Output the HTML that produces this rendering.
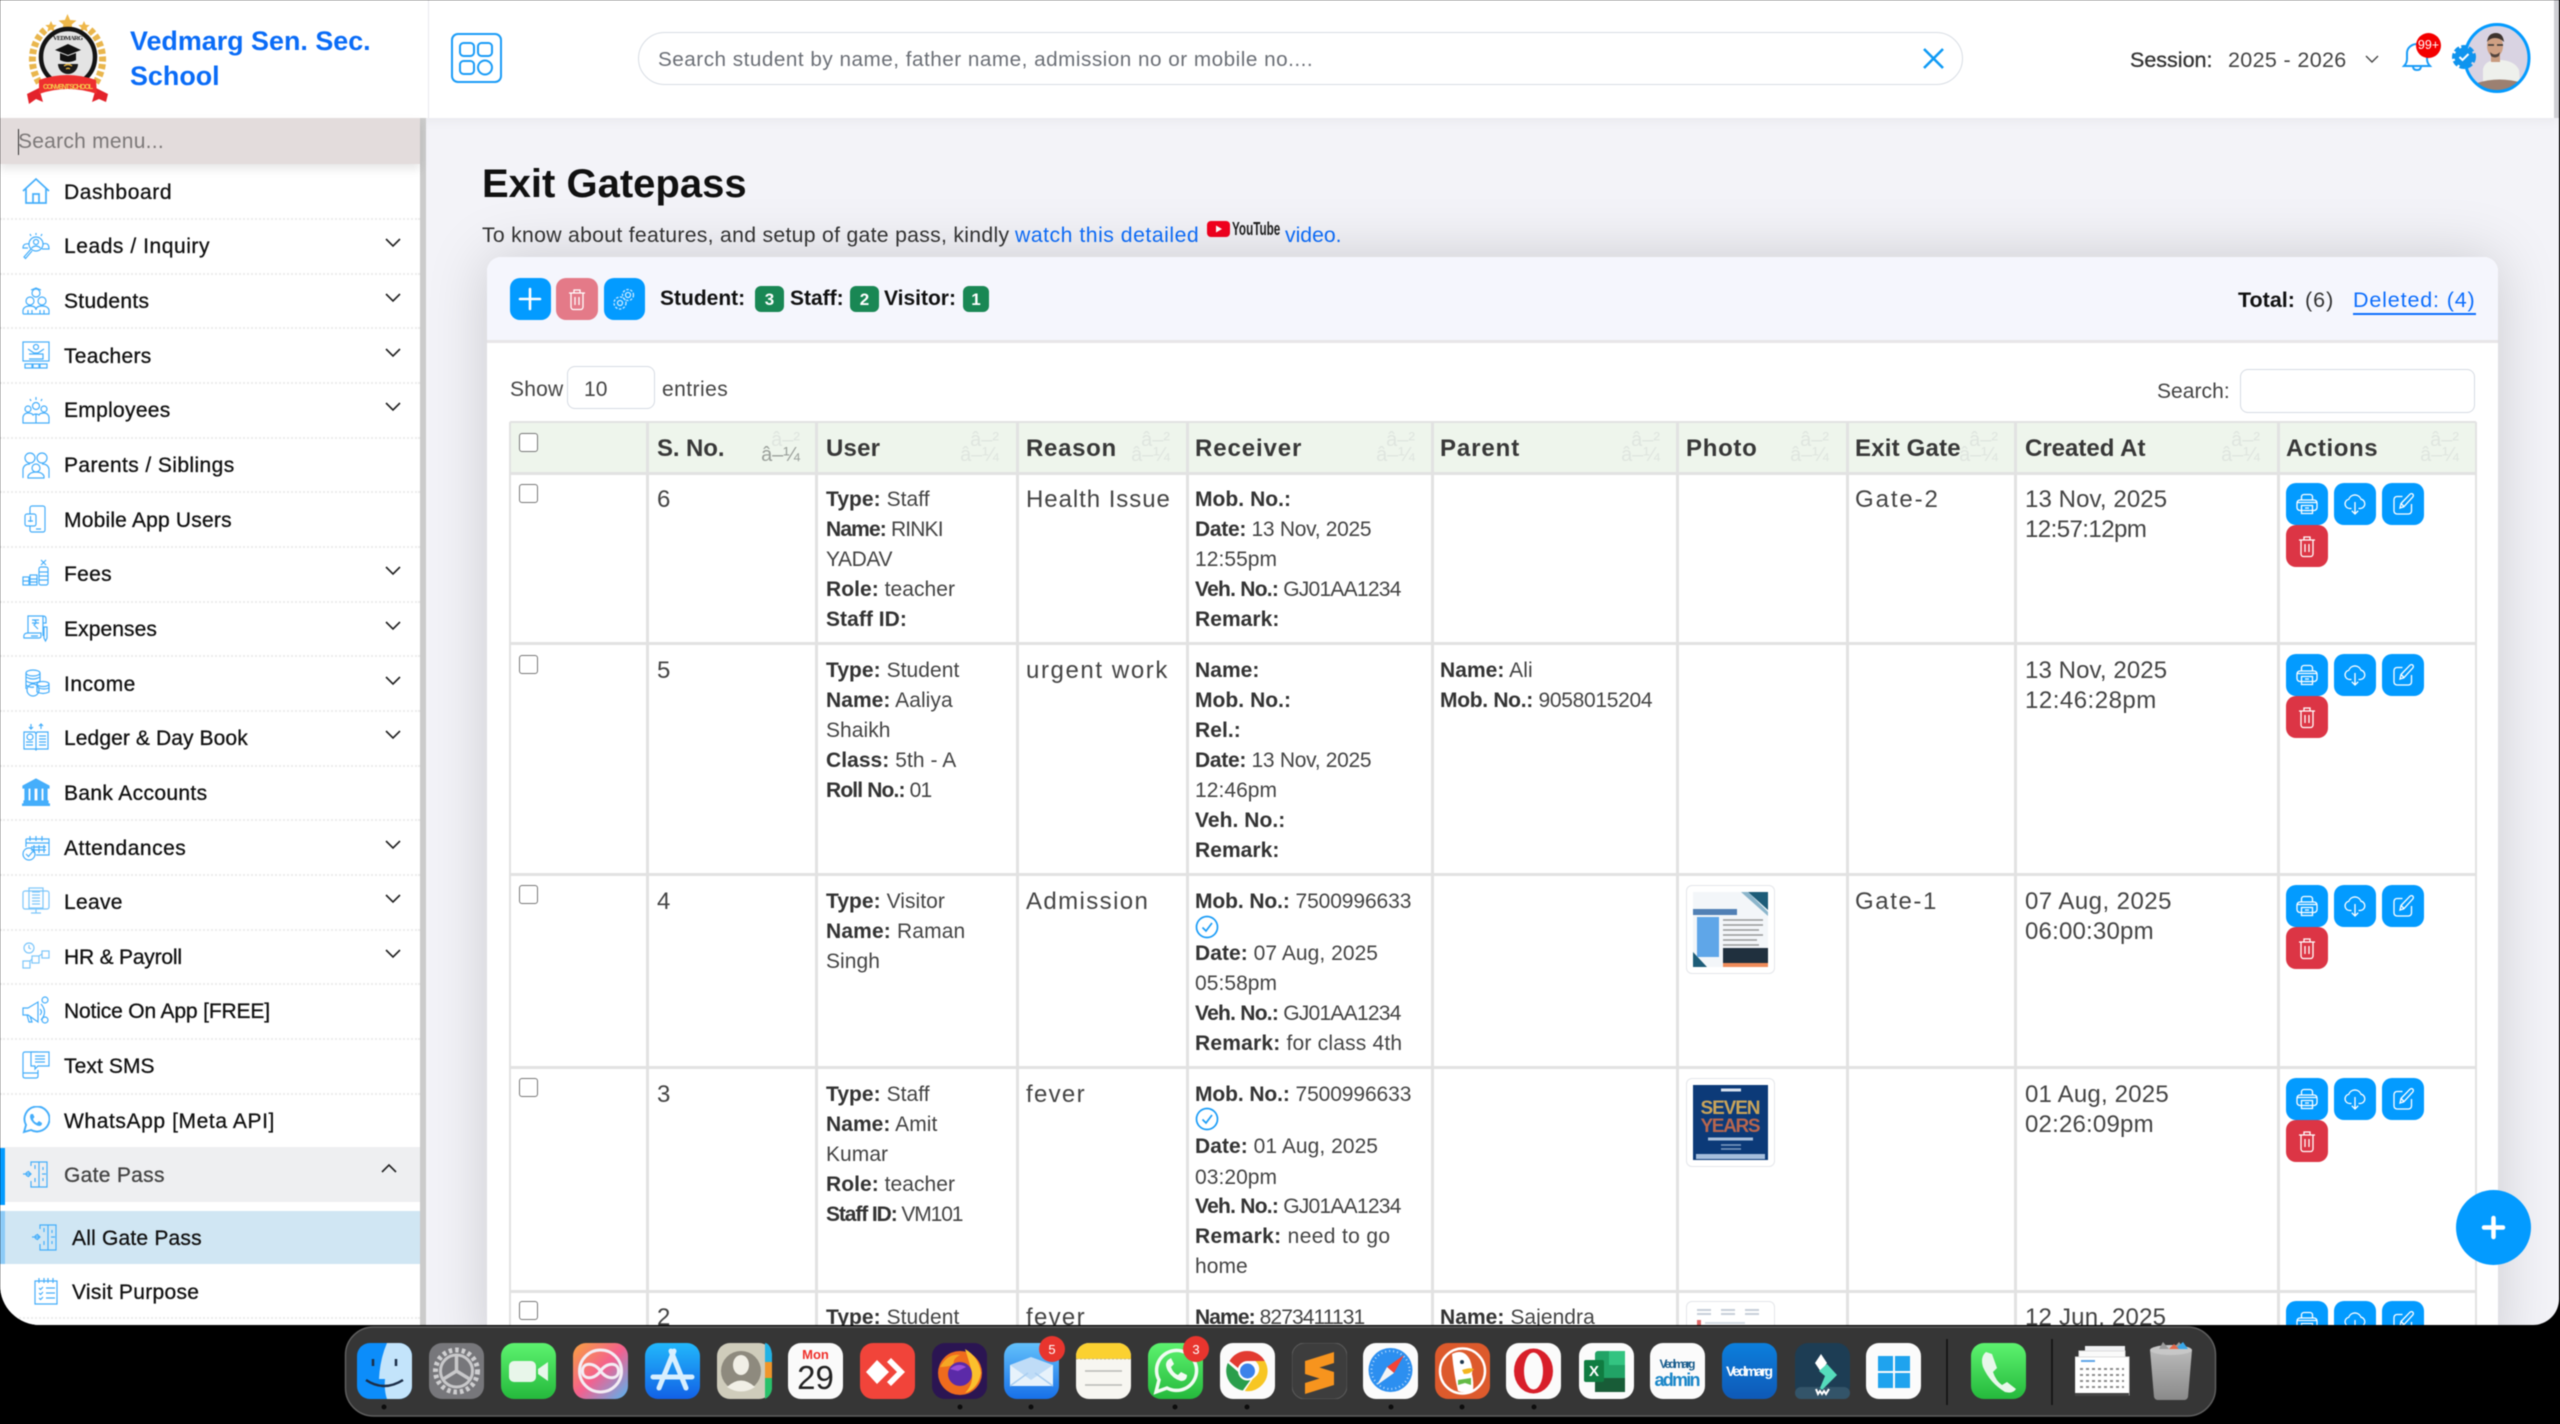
<!DOCTYPE html>
<html><head><meta charset="utf-8"><title>Exit Gatepass</title>
<style>
*{box-sizing:border-box}
html,body{margin:0;padding:0;width:2560px;height:1424px;overflow:hidden;background:#000;font-family:"Liberation Sans",sans-serif}
#root{position:absolute;left:0;top:0;width:2560px;height:1424px;filter:blur(.45px)}
#win{position:absolute;left:0;top:0;width:2559px;height:1325px;background:#f3f3f8;overflow:hidden;border-radius:0 0 26px 40px}
.a{position:absolute}
.t{position:absolute;white-space:nowrap;line-height:30px;height:30px;margin-top:1.5px}
.c{font-size:21px;color:#444;letter-spacing:.05px}
.c b{color:#333}
.l{font-size:24px;color:#444;letter-spacing:1px}
.d{letter-spacing:.1px}
.m{font-size:21px;color:#111;letter-spacing:.3px;-webkit-text-stroke:.3px #111;left:64px}
.h{font-size:24px;font-weight:700;color:#383838;letter-spacing:.2px}
.s{font-size:20px;line-height:20px;height:20px;color:#dfe5df;width:60px;text-align:right;position:absolute}
.sep{position:absolute;left:0;width:420px;height:0;border-top:2px dotted #ececec}
.vl{position:absolute;top:422px;height:903px;width:3px;background:#e2e2e2}
.hl{position:absolute;left:510px;width:1966px;height:3px;background:#e2e2e2}
.btn{position:absolute;width:42px;height:42px;border-radius:10px;background:#039bff}
.btn svg{position:absolute;left:9px;top:9px;width:24px;height:24px;fill:none;stroke:#fff;stroke-width:1.3}
.red{background:#dc3545}
.cb{position:absolute;width:19px;height:19px;border:1.5px solid #777;border-radius:3px;background:#fff;left:519px}
.ic{position:absolute;left:22px;width:28px;height:28px;fill:none;stroke:#45aefb;stroke-width:1.2}
.ch{position:absolute;left:385px;width:16px;height:10px;fill:none;stroke:#222;stroke-width:1.6}
.bd{position:absolute;top:286px;height:26px;border-radius:6px;background:#198754;color:#fff;font-size:17px;font-weight:700;text-align:center;line-height:27px}
.ph{position:absolute;left:1686px;width:89px;height:89px;background:#fff;border:1.5px solid #e4e6ea;border-radius:6px}
</style></head><body>
<div id="root">
<svg width="0" height="0" style="position:absolute"><defs>
<symbol id="pr" viewBox="0 0 24 24"><path d="M6.5 8V5a2.500 2.500 0 0 1 2.500-2.500h6A2.500 2.500 0 0 1 17.500 5v3"/><rect x="2" y="8" width="20" height="10.500" rx="3"/><path d="M6.500 13.500h11v8h-11z"/><path d="M2.500 10.500h19M10 16h4M10 18.500h4"/></symbol>
<symbol id="cl" viewBox="0 0 24 24"><path d="M8.500 16.500H6.500A4.700 4.700 0 0 1 5.800 7.200 6.500 6.500 0 0 1 18 7.200a4.700 4.700 0 0 1-.5 9.300h-2"/><path d="M12 10v12M8.800 18.800 12 22l3.200-3.200"/></symbol>
<symbol id="ed" viewBox="0 0 24 24"><path d="M11.500 4.500H6a3 3 0 0 0-3 3V19a3 3 0 0 0 3 3h11.500a3 3 0 0 0 3-3v-7"/><path d="M9 16l1-4.500L19 2.200a1.900 1.900 0 0 1 2.800 2.700L12.800 14.800zM10 11.500l3 3"/></symbol>
<symbol id="tr" viewBox="0 0 24 24"><path d="M4 6h16M9 6V3h6v3M6 6v14a2.500 2.500 0 0 0 2.500 2.500h7A2.500 2.500 0 0 0 18 20V6M10 10v8M14 10v8"/></symbol>
<symbol id="gt" viewBox="0 0 28 28"><path d="M9 6V2h16v25H9v-6M17 2v25M9 14H1M6 11l3 3-3 3M20 14h4M21 7v3M21 18v3M13 18v4M13 5v4"/><circle cx="6" cy="14" r="2"/></symbol>
</defs></svg>

<div id="win">
<!-- header -->
<div class="a" style="left:0;top:0;width:2559px;height:118px;background:#fff;box-shadow:0 2px 12px rgba(0,0,0,.05)"></div>
<div class="a" style="left:428px;top:0;width:1px;height:118px;background:#e9e9ee"></div>
<div class="a" style="left:2554px;top:0;width:6px;height:118px;background:#cfcfd4"></div>

<!-- logo -->
<svg class="a" style="left:27px;top:14px" width="81" height="90" viewBox="0 0 81 90">
<g fill="#efb84a"><path d="M40.500 0l2.600 6 6.400.5-4.900 4.100 1.500 6.200-5.600-3.400-5.600 3.400 1.500-6.200-4.900-4.100 6.400-.5z"/><path d="M57 7l1.700 3.700 4 .4-3 2.700.9 3.900L57 15.700l-3.600 2 .9-3.900-3-2.700 4-.4z"/><path d="M24 7l1.700 3.700 4 .4-3 2.700.9 3.900L24 15.700l-3.600 2 .9-3.900-3-2.700 4-.4z"/></g>
<path d="M18 16C5 28 0 50 13 70M63 16c13 12 18 34 5 54" fill="none" stroke="#e9b64d" stroke-width="7" stroke-dasharray="5 2.500"/>
<ellipse cx="41" cy="43" rx="27" ry="28" fill="#e4e4e4" stroke="#141414" stroke-width="4.500"/>
<path d="M28 36l13-6 13 6-13 5z" fill="#111"/><path d="M33 39v7q8 4 16 0v-7l-8 3z" fill="#111"/>
<path d="M31 50a10 10 0 0 0 20 0z" fill="#1a1a1a"/><path d="M37 52q4-3 8 0M39 55q2-1.500 4 0" stroke="#e5b33c" stroke-width="1.400" fill="none"/>
<path d="M0 80l12-6 4 14-7-3-7 5zM81 80l-12-6-4 14 7-3 7 3z" fill="#e3222b"/>
<path d="M12 66q28-10 57 0l1 14q-29-10-58 0z" fill="#ee2f2f"/>
<text x="41" y="75" font-size="7" fill="#f6cc4d" font-weight="700" text-anchor="middle" font-family="Liberation Sans" textLength="50">CONVENT SCHOOL</text>
<text x="41" y="26" font-size="6.500" fill="#222" font-weight="700" text-anchor="middle" font-family="Liberation Serif" textLength="30">VEDMARG</text>
</svg>
<div class="t" style="left:130px;top:24px;font-size:26.900px;font-weight:700;color:#0a6cf7">Vedmarg Sen. Sec.</div>
<div class="t" style="left:130px;top:59px;font-size:26.900px;font-weight:700;color:#0a6cf7">School</div>

<!-- grid button -->
<div class="a" style="left:451px;top:33px;width:51px;height:50px;border:2px solid #1a9cf7;border-radius:7px"></div>
<svg class="a" style="left:459px;top:41px" width="35" height="35" fill="none" stroke="#1a9cf7" stroke-width="2"><rect x="1" y="2" width="14" height="13" rx="3.500"/><rect x="19" y="2" width="14" height="13" rx="3.500"/><rect x="1" y="20" width="14" height="13" rx="3.500"/><circle cx="26" cy="26.500" r="7"/></svg>

<!-- top search -->
<div class="a" style="left:638px;top:32px;width:1325px;height:53px;border:1.5px solid #d8dde4;border-radius:27px;background:#fff"></div>
<div class="t" style="left:658px;top:43px;font-size:20.700px;color:#6b6f76;letter-spacing:.5px">Search student by name, father name, admission no or mobile no....</div>
<svg class="a" style="left:1922px;top:47px" width="23" height="23" stroke="#0f9bf5" stroke-width="2.600"><path d="M2 2l19 19M21 2 2 21"/></svg>

<div class="t" style="left:2130px;top:43px;font-size:21.500px;color:#333;-webkit-text-stroke:.3px #333">Session:</div>
<div class="t" style="left:2228px;top:43px;font-size:21.500px;color:#444;letter-spacing:.35px">2025 - 2026</div>
<svg class="a" style="left:2365px;top:55px" width="14" height="9" fill="none" stroke="#444" stroke-width="1.400"><path d="M1 1l6 6 6-6"/></svg>

<!-- bell -->
<svg class="a" style="left:2402px;top:43px" width="30" height="31" fill="none" stroke="#1a9cf7" stroke-width="2"><path d="M2 23q3-3 3-7V10a10 9 0 0 1 20 0v6q0 4 3 7zM11 23q0 4 4 4t4-4"/></svg>
<div class="a" style="left:2416px;top:33px;width:25px;height:25px;border-radius:50%;background:#f40000;color:#fff;font-size:12.500px;text-align:center;line-height:24px">99+</div>

<!-- avatar + verified -->
<svg class="a" style="left:2463px;top:23px" width="68" height="70" viewBox="0 0 68 70">
<defs><clipPath id="av"><ellipse cx="34" cy="35" rx="31" ry="33"/></clipPath></defs>
<ellipse cx="34" cy="35" rx="32" ry="34" fill="#d9d3e2"/>
<g clip-path="url(#av)"><path d="M20 70V46q2-8 12-9h6q14 1 18 10l2 23z" fill="#eef0ec"/><path d="M14 60q22-7 46 0v10H14z" fill="#9c8071"/><rect x="28" y="30" width="9" height="9" fill="#c99b7e"/><ellipse cx="32" cy="23" rx="8" ry="11" fill="#cfa083"/><path d="M24 19q1-9 9-9 7 0 8 9-4-4-9-4t-8 4z" fill="#3e342f"/><path d="M25 22h6M34 22h6" stroke="#333" stroke-width="1.400"/><path d="M27 29q5 5 10 0l-1 4q-4 3-8 0z" fill="#51433c"/></g>
<ellipse cx="34" cy="35" rx="32" ry="33.500" fill="none" stroke="#039bff" stroke-width="3"/>
</svg>
<svg class="a" style="left:2451px;top:44px" width="26" height="26"><circle cx="13" cy="13" r="9.500" fill="#0f94ee" stroke="#0f94ee" stroke-width="5" stroke-dasharray="5 2"/><path d="M8.500 13l3 3 6-6" fill="none" stroke="#fff" stroke-width="2"/></svg>

<!-- sidebar -->
<div class="a" style="left:0;top:118px;width:420px;height:1207px;background:#fff"></div>
<div class="a" style="left:420px;top:118px;width:6px;height:1207px;background:#cbcbcb"></div>
<div class="a" style="left:0;top:118px;width:420px;height:46px;background:#e3dcdc;box-shadow:0 5px 9px rgba(0,0,0,.1)"></div>
<div class="a" style="left:18px;top:129px;width:1px;height:26px;background:#333"></div>
<div class="t" style="left:18px;top:125px;font-size:21px;color:#7c7878;letter-spacing:.25px">Search menu...</div>

<div class="sep" style="top:218px"></div><div class="sep" style="top:273px"></div><div class="sep" style="top:327px"></div><div class="sep" style="top:382px"></div><div class="sep" style="top:437px"></div><div class="sep" style="top:491px"></div><div class="sep" style="top:546px"></div><div class="sep" style="top:601px"></div><div class="sep" style="top:655px"></div><div class="sep" style="top:710px"></div><div class="sep" style="top:765px"></div><div class="sep" style="top:819px"></div><div class="sep" style="top:874px"></div><div class="sep" style="top:929px"></div><div class="sep" style="top:983px"></div><div class="sep" style="top:1038px"></div><div class="sep" style="top:1093px"></div><div class="sep" style="top:1317px"></div>
<div class="a" style="left:0;top:1147px;width:420px;height:55px;background:#eeeff1"></div>
<div class="a" style="left:0;top:1148px;width:5px;height:57px;background:#039bff"></div>
<div class="a" style="left:0;top:1211px;width:420px;height:53px;background:#d0e6f3"></div>
<div class="a" style="left:0;top:1211px;width:5px;height:53px;background:#8ccbf7"></div>

<div class="t m" style="top:176px;letter-spacing:.6px">Dashboard</div>
<div class="t m" style="top:230px;letter-spacing:.55px">Leads / Inquiry</div>
<div class="t m" style="top:285px">Students</div>
<div class="t m" style="top:340px">Teachers</div>
<div class="t m" style="top:394px">Employees</div>
<div class="t m" style="top:449px;letter-spacing:.4px">Parents / Siblings</div>
<div class="t m" style="top:504px;letter-spacing:.2px">Mobile App Users</div>
<div class="t m" style="top:558px">Fees</div>
<div class="t m" style="top:613px;letter-spacing:.1px">Expenses</div>
<div class="t m" style="top:668px;letter-spacing:.5px">Income</div>
<div class="t m" style="top:722px;letter-spacing:.1px">Ledger &amp; Day Book</div>
<div class="t m" style="top:777px;letter-spacing:.35px">Bank Accounts</div>
<div class="t m" style="top:832px;letter-spacing:.5px">Attendances</div>
<div class="t m" style="top:886px">Leave</div>
<div class="t m" style="top:941px;letter-spacing:-.2px">HR &amp; Payroll</div>
<div class="t m" style="top:995px;letter-spacing:-.15px">Notice On App [FREE]</div>
<div class="t m" style="top:1050px;letter-spacing:.1px">Text SMS</div>
<div class="t m" style="top:1105px;letter-spacing:.6px">WhatsApp [Meta API]</div>
<div class="t m" style="top:1159px;color:#444;-webkit-text-stroke:.3px #444">Gate Pass</div>
<div class="t m" style="top:1222px;left:72px;letter-spacing:.2px">All Gate Pass</div>
<div class="t m" style="top:1276px;left:72px">Visit Purpose</div>

<!-- chevrons -->
<svg class="ch" style="top:238px"><path d="M1 1l7 7 7-7"/></svg>
<svg class="ch" style="top:293px"><path d="M1 1l7 7 7-7"/></svg>
<svg class="ch" style="top:348px"><path d="M1 1l7 7 7-7"/></svg>
<svg class="ch" style="top:402px"><path d="M1 1l7 7 7-7"/></svg>
<svg class="ch" style="top:566px"><path d="M1 1l7 7 7-7"/></svg>
<svg class="ch" style="top:621px"><path d="M1 1l7 7 7-7"/></svg>
<svg class="ch" style="top:676px"><path d="M1 1l7 7 7-7"/></svg>
<svg class="ch" style="top:730px"><path d="M1 1l7 7 7-7"/></svg>
<svg class="ch" style="top:840px"><path d="M1 1l7 7 7-7"/></svg>
<svg class="ch" style="top:894px"><path d="M1 1l7 7 7-7"/></svg>
<svg class="ch" style="top:949px"><path d="M1 1l7 7 7-7"/></svg>
<svg class="ch" style="top:1163px;left:381px"><path d="M1 9l7-7 7 7"/></svg>

<!-- sidebar icons -->
<svg class="ic" style="top:177px;stroke-width:1.700" viewBox="0 0 28 28"><path d="M1 14 14 2l13 12M4 11v15h20V11M11 26v-9h6v9"/></svg>
<svg class="ic" style="top:232px" viewBox="0 0 28 28"><circle cx="14" cy="12" r="7"/><circle cx="14" cy="10" r="2.500"/><path d="M9.500 16q4.500-4 9 0M9 17 2 25l1.500 1.500L10 19M14 1v2M8 2l1 2M20 2l-1 2M21 12q6-2 6 5h-7M7 12q-6-1-6 4h5"/></svg>
<svg class="ic" style="top:287px" viewBox="0 0 28 28"><circle cx="14" cy="6" r="4"/><path d="M9 3l5-2 5 2"/><circle cx="8" cy="14" r="4"/><circle cx="20" cy="14" r="4"/><path d="M1 27v-4q1-4 7-4t6 4q0-4 6-4t7 4v4H1M6 23v4M10 23v4M18 23v4M22 23v4"/></svg>
<svg class="ic" style="top:341px" viewBox="0 0 28 28"><rect x="1" y="1" width="26" height="19"/><circle cx="14" cy="6" r="2.500"/><path d="M6 8l6 4h4l6-4M7 13h14v5H7M3 27v-4h7v4zM11 27v-4h6v4zM18 27v-4h7v4z"/></svg>
<svg class="ic" style="top:396px" viewBox="0 0 28 28"><circle cx="14" cy="10" r="3.500"/><circle cx="6" cy="13" r="3"/><circle cx="22" cy="13" r="3"/><path d="M1 27v-6q1-4 5-4t5 2q3-2 6 0 1-2 5-2t5 4v6zM14 1v3M8 3l1 2M20 3l-1 2M14 18v9"/></svg>
<svg class="ic" style="top:451px" viewBox="0 0 28 28"><circle cx="8" cy="7" r="5"/><circle cx="20" cy="7" r="5"/><circle cx="14" cy="17" r="4"/><path d="M1 27v-9q1-5 7-5M27 27v-9q-1-5-7-5M6 27v-2q2-4 8-4t8 4v2z"/></svg>
<svg class="ic" style="top:505px" viewBox="0 0 28 28"><rect x="8" y="1" width="15" height="26" rx="2"/><rect x="3" y="9" width="11" height="12" rx="2" fill="#fff"/><path d="M8.500 11v6M6 16h5M14 24h5"/></svg>
<svg class="ic" style="top:559px" viewBox="0 0 28 28"><rect x="1" y="18" width="6" height="8"/><rect x="8" y="16" width="7" height="10"/><rect x="17" y="8" width="9" height="18" rx="2"/><path d="M1 22h6M8 20h7M8 23h7M17 13h9M17 17h9M17 21h9M19 1l5 5M24 1l-5 5"/></svg>
<svg class="ic" style="top:614px" viewBox="0 0 28 28"><path d="M6 19V2h15v20M21 2q3 0 3 3v4h-3M2 24q-1-5 4-5h13v3q0 2-2 2zM10 6h7M10 9h7M12 6q4 2 0 5l4 4M9 22h7M25 13v11l-1.500 3-1.500-3V13z"/></svg>
<svg class="ic" style="top:669px" viewBox="0 0 28 28"><ellipse cx="11" cy="4" rx="7" ry="3"/><path d="M4 4v16M18 4v9M4 8q7 4 14 0M4 12q7 4 14 0M4 16q4 3 8 2"/><circle cx="11" cy="21" r="6"/><ellipse cx="21" cy="15" rx="6" ry="2.500"/><path d="M15 15v8q6 3 12 0v-8M17 19q5 2 10 0"/></svg>
<svg class="ic" style="top:723px" viewBox="0 0 28 28"><path d="M2 9h11l1 2 1-2h11v17H15l-1 1-1-1H2zM14 11v15"/><circle cx="8" cy="14" r="3"/><path d="M4 19h7M4 22h7M17 13h7M17 16h7M17 19h7M17 22h7M9 1v5M7 4l2 2 2-2M19 6V1M17 3l2-2 2 2"/></svg>
<svg class="ic" style="top:778px;fill:#45aefb" viewBox="0 0 28 28"><path d="M14 1 1 8v2h26V8z"/><path d="M3 11h3v11H3zM9 11h3v11H9zM16 11h3v11h-3zM22 11h3v11h-3zM2 23h24v2H2zM0 26h28v2H0z"/></svg>
<svg class="ic" style="top:833px" viewBox="0 0 28 28"><path d="M4 6h23v16H14M4 6v8M4 10h23M8 3v5M14 3v5M20 3v5M9 14h15M9 17h15M12 12v8M17 12v8M22 12v8"/><circle cx="7" cy="21" r="6"/><path d="M4 21l2.500 2.500L12 17"/></svg>
<svg class="ic" style="top:887px;stroke:#7cc6fb" viewBox="0 0 28 28"><rect x="1" y="4" width="26" height="18" rx="2"/><rect x="7" y="1" width="14" height="20"/><path d="M10 5h8M10 8h8M10 11h8M10 14h8M10 17h8M14 22v4M9 26h10"/></svg>
<svg class="ic" style="top:942px;stroke:#7cc6fb" viewBox="0 0 28 28"><circle cx="7" cy="6" r="5"/><path d="M7 3v3l2 1"/><rect x="1" y="19" width="7" height="7"/><rect x="10" y="14" width="7" height="7"/><rect x="20" y="9" width="7" height="7"/><path d="M8 19l2-2M17 14l3-2"/></svg>
<svg class="ic" style="top:996px" viewBox="0 0 28 28"><path d="M1 12v7h5l10 7V6L6 12zM5 19l2 7h3l-2-6M18 13q3 3 0 6M19 8q7 8 0 16"/><circle cx="23" cy="4" r="3"/><circle cx="23" cy="24" r="3"/></svg>
<svg class="ic" style="top:1051px" viewBox="0 0 28 28"><path d="M16 1H3Q1 1 1 3v22q0 2 2 2h11q2 0 2-2v-6M1 22h15"/><path d="M9 1h18v14H16l-3 3v-3H9zM13 5h10M13 8h10M13 11h10" fill="#fff"/></svg>
<svg class="ic" style="top:1106px;stroke-width:1.900" viewBox="0 0 28 28"><path d="M2 26l2-7A12.500 12.500 0 1 1 9 24z"/><path d="M9 8q-2 2 0 6 3 5 8 6 3 0 3-3l-3-2-2 2q-3-1-4-4l1.500-2-1.500-3z" fill="#45aefb" stroke="none"/></svg>
<svg class="ic" style="top:1160px"><use href="#gt"/></svg>
<svg class="ic" style="top:1223px;left:31px"><use href="#gt"/></svg>
<svg class="ic" style="top:1277px;left:32px" viewBox="0 0 28 28"><path d="M3 4h22v23H3zM7 1v5M12 1v5M16 1v5M21 1v5M7 11l1.500 1.500L11 10M14 11h9M7 16l1.500 1.500L11 15M14 16h9M7 21l1.500 1.500L11 20M14 21h9"/></svg>

<!-- title -->
<div class="t" style="left:482px;top:162px;height:40px;line-height:40px;font-size:40px;font-weight:700;color:#111">Exit Gatepass</div>
<div class="t" style="left:482px;top:219px;font-size:21.200px;color:#333;letter-spacing:.3px">To know about features, and setup of gate pass, kindly</div>
<div class="t" style="left:1015px;top:219px;font-size:21.200px;color:#0d6efd;letter-spacing:.52px">watch this detailed</div>
<svg class="a" style="left:1206px;top:220px" width="26" height="20"><rect x="1" y="1" width="23" height="16" rx="4" fill="#f4001e"/><path d="M10 5.500l6 3.500-6 3.500z" fill="#fff"/></svg>
<div class="t" style="left:1232px;top:212px;font-size:18px;font-weight:700;color:#222;transform:scaleX(.65);transform-origin:left">YouTube</div>
<div class="t" style="left:1285px;top:219px;font-size:21.200px;color:#0d6efd">video.</div>

<!-- card -->
<div class="a" style="left:487px;top:257px;width:2011px;height:1100px;background:#fff;border-radius:14px 14px 0 0;box-shadow:0 0 60px rgba(0,0,0,.17)"></div>
<div class="a" style="left:487px;top:257px;width:2011px;height:86px;background:#f5f6fd;border-radius:14px 14px 0 0;border-bottom:3px solid #e8e6e8"></div>

<div class="btn" style="left:510px;top:278px;width:41px"><svg style="left:8px;stroke-width:2.600;stroke-linecap:round" viewBox="0 0 24 24"><path d="M12 2v20M2 12h20"/></svg></div>
<div class="btn" style="left:556px;top:278px;width:42px;background:#e47a88"><svg viewBox="0 0 24 24"><use href="#tr"/></svg></div>
<div class="btn" style="left:604px;top:278px;width:41px"><svg style="left:8px;stroke:#cdeaff" viewBox="0 0 24 24"><circle cx="16" cy="8" r="2.500"/><circle cx="16" cy="8" r="5.500" stroke-dasharray="2.500 1.500"/><circle cx="8" cy="16" r="2.500"/><circle cx="8" cy="16" r="6" stroke-dasharray="2.500 1.500"/></svg></div>

<div class="t" style="left:660px;top:282px;font-size:21px;font-weight:700;color:#111">Student:</div>
<div class="bd" style="left:755px;width:29px">3</div>
<div class="t" style="left:790px;top:282px;font-size:21px;font-weight:700;color:#111">Staff:</div>
<div class="bd" style="left:850px;width:29px">2</div>
<div class="t" style="left:884px;top:282px;font-size:21px;font-weight:700;color:#111">Visitor:</div>
<div class="bd" style="left:963px;width:26px">1</div>

<div class="t" style="left:2238px;top:283px;font-size:21.500px;font-weight:700;color:#111">Total:</div>
<div class="t" style="left:2305px;top:283px;font-size:21.500px;color:#333;letter-spacing:1px">(6)</div>
<div class="t" style="left:2353px;top:283px;font-size:21.500px;color:#0d6efd;letter-spacing:.85px">Deleted: (4)</div>
<div class="a" style="left:2353px;top:313px;width:123px;height:2px;background:#0d6efd"></div>

<div class="t c" style="left:510px;top:373px;letter-spacing:.2px">Show</div>
<div class="a" style="left:567px;top:366px;width:88px;height:43px;border:1.500px solid #d6dbe3;border-radius:8px;background:#fff"></div>
<div class="t c" style="left:584px;top:373px">10</div>
<div class="t c" style="left:662px;top:373px;letter-spacing:.45px">entries</div>
<div class="t c" style="left:2157px;top:375px">Search:</div>
<div class="a" style="left:2240px;top:369px;width:235px;height:44px;border:1.500px solid #d6dbe3;border-radius:8px;background:#fff"></div>

<!-- table -->
<div class="a" style="left:510px;top:423px;width:1965px;height:50px;background:#eef5ec"></div>
<div class="hl" style="top:421px;height:2px"></div>
<div class="hl" style="top:472px"></div><div class="hl" style="top:642px"></div><div class="hl" style="top:873px"></div><div class="hl" style="top:1066px"></div><div class="hl" style="top:1290px"></div>
<div class="vl" style="left:509px;width:1.500px"></div><div class="vl" style="left:646px"></div><div class="vl" style="left:815px"></div><div class="vl" style="left:1016px"></div><div class="vl" style="left:1186px"></div><div class="vl" style="left:1431px"></div><div class="vl" style="left:1676px"></div><div class="vl" style="left:1846px"></div><div class="vl" style="left:2014px"></div><div class="vl" style="left:2277px"></div><div class="vl" style="left:2475px;width:1.500px"></div>

<div class="cb" style="top:433px"></div><div class="cb" style="top:484px"></div><div class="cb" style="top:655px"></div><div class="cb" style="top:885px"></div><div class="cb" style="top:1078px"></div><div class="cb" style="top:1301px"></div>

<div class="t h" style="left:657px;top:432px;letter-spacing:-.1px">S. No.</div>
<div class="t h" style="left:826px;top:432px">User</div>
<div class="t h" style="left:1026px;top:432px;letter-spacing:.7px">Reason</div>
<div class="t h" style="left:1195px;top:432px;letter-spacing:.9px">Receiver</div>
<div class="t h" style="left:1440px;top:432px;letter-spacing:.9px">Parent</div>
<div class="t h" style="left:1686px;top:432px;letter-spacing:.7px">Photo</div>
<div class="t h" style="left:1855px;top:432px">Exit Gate</div>
<div class="t h" style="left:2025px;top:432px;letter-spacing:0">Created At</div>
<div class="t h" style="left:2286px;top:432px;letter-spacing:.6px">Actions</div>

<div class="s" style="left:740px;top:430px">â–²</div><div class="s" style="left:740px;top:445px;color:#9a9f9a">â–¼</div>
<div class="s" style="left:939px;top:430px">â–²</div><div class="s" style="left:939px;top:445px">â–¼</div>
<div class="s" style="left:1110px;top:430px">â–²</div><div class="s" style="left:1110px;top:445px">â–¼</div>
<div class="s" style="left:1355px;top:430px">â–²</div><div class="s" style="left:1355px;top:445px">â–¼</div>
<div class="s" style="left:1600px;top:430px">â–²</div><div class="s" style="left:1600px;top:445px">â–¼</div>
<div class="s" style="left:1769px;top:430px">â–²</div><div class="s" style="left:1769px;top:445px">â–¼</div>
<div class="s" style="left:1938px;top:430px">â–²</div><div class="s" style="left:1938px;top:445px">â–¼</div>
<div class="s" style="left:2200px;top:430px">â–²</div><div class="s" style="left:2200px;top:445px">â–¼</div>
<div class="s" style="left:2399px;top:430px">â–²</div><div class="s" style="left:2399px;top:445px">â–¼</div>

<!-- row 1 -->
<div class="t l" style="left:657px;top:483px">6</div>
<div class="t c" style="left:826px;top:483px"><b>Type:</b> Staff</div>
<div class="t c" style="left:826px;top:513px;letter-spacing:-.85px"><b>Name:</b> RINKI</div>
<div class="t c" style="left:826px;top:543px;letter-spacing:-.4px">YADAV</div>
<div class="t c" style="left:826px;top:573px"><b>Role:</b> teacher</div>
<div class="t c" style="left:826px;top:603px"><b>Staff ID:</b></div>
<div class="t l" style="left:1026px;top:483px;letter-spacing:.95px">Health Issue</div>
<div class="t c" style="left:1195px;top:483px"><b>Mob. No.:</b></div>
<div class="t c" style="left:1195px;top:513px;letter-spacing:-.3px"><b>Date:</b> 13 Nov, 2025</div>
<div class="t c" style="left:1195px;top:543px">12:55pm</div>
<div class="t c" style="left:1195px;top:573px;letter-spacing:-.75px"><b>Veh. No.:</b> GJ01AA1234</div>
<div class="t c" style="left:1195px;top:603px"><b>Remark:</b></div>
<div class="t l" style="left:1855px;top:483px;letter-spacing:1.9px">Gate-2</div>
<div class="t l d" style="left:2025px;top:483px">13 Nov, 2025</div>
<div class="t l" style="left:2025px;top:513px;letter-spacing:-.55px">12:57:12pm</div>

<!-- row 2 -->
<div class="t l" style="left:657px;top:654px">5</div>
<div class="t c" style="left:826px;top:654px"><b>Type:</b> Student</div>
<div class="t c" style="left:826px;top:684px"><b>Name:</b> Aaliya</div>
<div class="t c" style="left:826px;top:714px">Shaikh</div>
<div class="t c" style="left:826px;top:744px"><b>Class:</b> 5th - A</div>
<div class="t c" style="left:826px;top:774px;letter-spacing:-.85px"><b>Roll No.:</b> 01</div>
<div class="t l" style="left:1026px;top:654px;letter-spacing:1.6px">urgent work</div>
<div class="t c" style="left:1195px;top:654px"><b>Name:</b></div>
<div class="t c" style="left:1195px;top:684px"><b>Mob. No.:</b></div>
<div class="t c" style="left:1195px;top:714px"><b>Rel.:</b></div>
<div class="t c" style="left:1195px;top:744px;letter-spacing:-.3px"><b>Date:</b> 13 Nov, 2025</div>
<div class="t c" style="left:1195px;top:774px">12:46pm</div>
<div class="t c" style="left:1195px;top:804px"><b>Veh. No.:</b></div>
<div class="t c" style="left:1195px;top:834px"><b>Remark:</b></div>
<div class="t c" style="left:1440px;top:654px"><b>Name:</b> Ali</div>
<div class="t c" style="left:1440px;top:684px;letter-spacing:-.3px"><b>Mob. No.:</b> 9058015204</div>
<div class="t l d" style="left:2025px;top:654px">13 Nov, 2025</div>
<div class="t l" style="left:2025px;top:684px;letter-spacing:.5px">12:46:28pm</div>

<!-- row 3 -->
<div class="t l" style="left:657px;top:885px">4</div>
<div class="t c" style="left:826px;top:885px"><b>Type:</b> Visitor</div>
<div class="t c" style="left:826px;top:915px;letter-spacing:.15px"><b>Name:</b> Raman</div>
<div class="t c" style="left:826px;top:945px">Singh</div>
<div class="t l" style="left:1026px;top:885px;letter-spacing:1.4px">Admission</div>
<div class="t c" style="left:1195px;top:885px;letter-spacing:-.1px"><b>Mob. No.:</b> 7500996633</div>
<svg class="a" style="left:1195px;top:915px" width="24" height="24" fill="none" stroke="#1a9cf7" stroke-width="1.700"><circle cx="12" cy="12" r="10.500"/><path d="M7.500 12.500l3.500 3.500 6-8"/></svg>
<div class="t c" style="left:1195px;top:937px"><b>Date:</b> 07 Aug, 2025</div>
<div class="t c" style="left:1195px;top:967px">05:58pm</div>
<div class="t c" style="left:1195px;top:997px;letter-spacing:-.75px"><b>Veh. No.:</b> GJ01AA1234</div>
<div class="t c" style="left:1195px;top:1027px;letter-spacing:.2px"><b>Remark:</b> for class 4th</div>
<div class="ph" style="top:885px"></div>
<svg class="a" style="left:1693px;top:892px" width="75" height="75" viewBox="0 0 75 75"><rect width="75" height="75" fill="#f3f6f9"/><path d="M55 0h20v18zM0 60l14 15H0z" fill="#1d5c78"/><path d="M48 0h7l20 20v4z" fill="#8bb5cb"/><rect y="17" width="44" height="6" fill="#5180b5"/><rect x="4" y="25" width="22" height="40" fill="#5fa6e8"/><path d="M30 28h40M30 33h40M30 38h36M30 43h40M30 48h34M30 53h36" stroke="#999" stroke-width="1.500"/><rect x="30" y="56" width="45" height="15" fill="#20303e"/><rect x="30" y="71" width="45" height="4" fill="#ef8b5a"/></svg>
<div class="t l" style="left:1855px;top:885px;letter-spacing:1.6px">Gate-1</div>
<div class="t l" style="left:2025px;top:885px;letter-spacing:.45px">07 Aug, 2025</div>
<div class="t l" style="left:2025px;top:915px;letter-spacing:.2px">06:00:30pm</div>

<!-- row 4 -->
<div class="t l" style="left:657px;top:1078px">3</div>
<div class="t c" style="left:826px;top:1078px"><b>Type:</b> Staff</div>
<div class="t c" style="left:826px;top:1108px"><b>Name:</b> Amit</div>
<div class="t c" style="left:826px;top:1138px">Kumar</div>
<div class="t c" style="left:826px;top:1168px"><b>Role:</b> teacher</div>
<div class="t c" style="left:826px;top:1198px;letter-spacing:-1.1px"><b>Staff ID:</b> VM101</div>
<div class="t l" style="left:1026px;top:1078px;letter-spacing:1.3px">fever</div>
<div class="t c" style="left:1195px;top:1078px;letter-spacing:-.1px"><b>Mob. No.:</b> 7500996633</div>
<svg class="a" style="left:1195px;top:1107px" width="24" height="24" fill="none" stroke="#1a9cf7" stroke-width="1.700"><circle cx="12" cy="12" r="10.500"/><path d="M7.500 12.500l3.500 3.500 6-8"/></svg>
<div class="t c" style="left:1195px;top:1130px"><b>Date:</b> 01 Aug, 2025</div>
<div class="t c" style="left:1195px;top:1161px">03:20pm</div>
<div class="t c" style="left:1195px;top:1190px;letter-spacing:-.75px"><b>Veh. No.:</b> GJ01AA1234</div>
<div class="t c" style="left:1195px;top:1220px;letter-spacing:.35px"><b>Remark:</b> need to go</div>
<div class="t c" style="left:1195px;top:1250px">home</div>
<div class="ph" style="top:1078px"></div>
<svg class="a" style="left:1693px;top:1085px" width="75" height="75" viewBox="0 0 75 75"><rect width="75" height="75" fill="#0c3a78"/><text x="37.500" y="29" font-size="19" font-weight="700" fill="#c9a45a" text-anchor="middle" font-family="Liberation Sans" textLength="60">SEVEN</text><text x="37.500" y="47" font-size="19" font-weight="700" fill="#b7664e" text-anchor="middle" font-family="Liberation Sans" textLength="60">YEARS</text><path d="M15 54h45" stroke="#a8c0dc" stroke-width="3"/><path d="M28 60h20M28 64h20" stroke="#7f9dc2" stroke-width="1.500"/><rect x="3" y="69" width="69" height="5" fill="#a5bedc"/><path d="M28 5h20" stroke="#d8e2ef" stroke-width="3"/></svg>
<div class="t l" style="left:2025px;top:1078px;letter-spacing:.2px">01 Aug, 2025</div>
<div class="t l" style="left:2025px;top:1108px;letter-spacing:.2px">02:26:09pm</div>

<!-- row 5 -->
<div class="t l" style="left:657px;top:1301px">2</div>
<div class="t c" style="left:826px;top:1301px"><b>Type:</b> Student</div>
<div class="t l" style="left:1026px;top:1301px;letter-spacing:1.3px">fever</div>
<div class="t c" style="left:1195px;top:1301px;letter-spacing:-.9px"><b>Name:</b> 8273411131</div>
<div class="t c" style="left:1440px;top:1301px"><b>Name:</b> Sajendra</div>
<div class="ph" style="top:1301px"></div>
<svg class="a" style="left:1693px;top:1308px" width="75" height="20"><path d="M4 2h14M4 6h14M28 2h14M28 6h14M52 2h14M52 6h14" stroke="#c7cfd9" stroke-width="2"/><rect x="4" y="12" width="4" height="6" fill="#e06a6a"/><path d="M12 15h40" stroke="#d6dde5" stroke-width="2"/></svg>
<div class="t l" style="left:2025px;top:1301px;letter-spacing:.2px">12 Jun, 2025</div>

<!-- action buttons -->
<div class="btn" style="left:2286px;top:483px"><svg><use href="#pr"/></svg></div><div class="btn" style="left:2334px;top:483px"><svg><use href="#cl"/></svg></div><div class="btn" style="left:2382px;top:483px"><svg><use href="#ed"/></svg></div><div class="btn red" style="left:2286px;top:525px"><svg><use href="#tr"/></svg></div>
<div class="btn" style="left:2286px;top:654px"><svg><use href="#pr"/></svg></div><div class="btn" style="left:2334px;top:654px"><svg><use href="#cl"/></svg></div><div class="btn" style="left:2382px;top:654px"><svg><use href="#ed"/></svg></div><div class="btn red" style="left:2286px;top:696px"><svg><use href="#tr"/></svg></div>
<div class="btn" style="left:2286px;top:885px"><svg><use href="#pr"/></svg></div><div class="btn" style="left:2334px;top:885px"><svg><use href="#cl"/></svg></div><div class="btn" style="left:2382px;top:885px"><svg><use href="#ed"/></svg></div><div class="btn red" style="left:2286px;top:927px"><svg><use href="#tr"/></svg></div>
<div class="btn" style="left:2286px;top:1078px"><svg><use href="#pr"/></svg></div><div class="btn" style="left:2334px;top:1078px"><svg><use href="#cl"/></svg></div><div class="btn" style="left:2382px;top:1078px"><svg><use href="#ed"/></svg></div><div class="btn red" style="left:2286px;top:1120px"><svg><use href="#tr"/></svg></div>
<div class="btn" style="left:2286px;top:1301px"><svg><use href="#pr"/></svg></div><div class="btn" style="left:2334px;top:1301px"><svg><use href="#cl"/></svg></div><div class="btn" style="left:2382px;top:1301px"><svg><use href="#ed"/></svg></div>

<!-- FAB -->
<div class="a" style="left:2456px;top:1190px;width:75px;height:75px;border-radius:50%;background:#039bff"></div>
<svg class="a" style="left:2481px;top:1215px" width="25" height="25" stroke="#fff" stroke-width="4.500" stroke-linecap="round"><path d="M12.500 3v19M3 12.500h19"/></svg>
</div>

<!-- dock -->
<svg class="a" style="left:0;top:1325px" width="2560" height="99" viewBox="0 1325 2560 99" font-family="Liberation Sans">
<defs>
<linearGradient id="gMail" x1="0" y1="0" x2="0" y2="1"><stop offset="0" stop-color="#63c1fb"/><stop offset="1" stop-color="#1770e8"/></linearGradient>
<linearGradient id="gFace" x1="0" y1="0" x2="0" y2="1"><stop offset="0" stop-color="#5df36f"/><stop offset="1" stop-color="#25b93c"/></linearGradient>
<linearGradient id="gApp" x1="0" y1="0" x2="0" y2="1"><stop offset="0" stop-color="#22b8fb"/><stop offset="1" stop-color="#1261e6"/></linearGradient>
<linearGradient id="gFree" x1="0" y1="0" x2="1" y2="1"><stop offset="0" stop-color="#f9a13f"/><stop offset=".5" stop-color="#f4608e"/><stop offset="1" stop-color="#54b5f2"/></linearGradient>
<linearGradient id="gV" x1="0" y1="0" x2="0" y2="1"><stop offset="0" stop-color="#0c7fdc"/><stop offset="1" stop-color="#0f59b7"/></linearGradient>
<linearGradient id="gTr" x1="0" y1="0" x2="0" y2="1"><stop offset="0" stop-color="#b9b9b9"/><stop offset="1" stop-color="#8a8a8a"/></linearGradient>
</defs>
<rect x="345.500" y="1327" width="1870" height="89" rx="28" fill="#363636" stroke="#5e5e5e" stroke-width="1.500"/>
<path d="M1947 1339v66M2052 1339v66" stroke="#111" stroke-width="1.500"/>

<svg x="357" y="1343" width="55" height="56" viewBox="0 0 55 56"><rect width="55" height="56" rx="13" fill="#0c8dfa"/><path d="M27 0h15a13 13 0 0 1 13 13v30a13 13 0 0 1-13 13H30q-3-8-2-20h-6q1-20 8-36z" fill="#c3e4fb"/><path d="M16 16v7M39 16v7" stroke="#1c2e48" stroke-width="2.500"/><path d="M9 37q18 12 37 0" fill="none" stroke="#1c2e48" stroke-width="2.500"/></svg>
<svg x="429" y="1343" width="55" height="56" viewBox="0 0 55 56"><rect width="55" height="56" rx="13" fill="#77777b"/><circle cx="27.500" cy="28" r="21" fill="none" stroke="#cfcfd1" stroke-width="5" stroke-dasharray="3.500 3"/><circle cx="27.500" cy="28" r="16" fill="#77777b" stroke="#c8c8ca" stroke-width="3"/><path d="M27.500 28V13M27.500 28l13 8M27.500 28l-13 8" stroke="#c8c8ca" stroke-width="3.500"/></svg>
<svg x="501" y="1343" width="55" height="56" viewBox="0 0 55 56"><rect width="55" height="56" rx="13" fill="url(#gFace)"/><rect x="8" y="18" width="27" height="21" rx="5" fill="#e8f6ea"/><path d="M37 26l10-7v19l-10-7z" fill="#e8f6ea"/></svg>
<svg x="573" y="1343" width="55" height="56" viewBox="0 0 55 56"><rect width="55" height="56" rx="13" fill="url(#gFree)"/><g fill="none" stroke="#f4edf4" stroke-width="3"><circle cx="27.500" cy="28" r="21"/><path d="M27.500 28c-6-9-18-9-18 0s12 9 18 0 18-9 18 0-12 9-18 0z"/></g></svg>
<svg x="645" y="1343" width="55" height="56" viewBox="0 0 55 56"><rect width="55" height="56" rx="13" fill="url(#gApp)"/><path d="M29 8 14 45M26 8l15 37M8 34h39" stroke="#d8effe" stroke-width="5" stroke-linecap="round"/></svg>
<svg x="717" y="1343" width="55" height="56" viewBox="0 0 55 56"><rect width="55" height="56" rx="13" fill="#cfccbb"/><path d="M48 0h0a7 13 0 0 1 7 13v6h-7z" fill="#22b2e5"/><rect x="48" y="19" width="7" height="16" fill="#f0962a"/><path d="M48 35h7v8a13 13 0 0 1-7 13z" fill="#29c16a"/><circle cx="24" cy="28" r="20" fill="#8e8a7e"/><ellipse cx="24" cy="22" rx="8" ry="10" fill="#f1efe6"/><path d="M10 44q14-13 28 0-14 9-28 0z" fill="#f1efe6"/></svg>
<svg x="788" y="1343" width="55" height="56" viewBox="0 0 55 56"><rect width="55" height="56" rx="13" fill="#fafafa"/><text x="27.500" y="16" font-size="13" fill="#f0312b" text-anchor="middle" font-weight="700">Mon</text><text x="27.500" y="46" font-size="33" fill="#222" text-anchor="middle">29</text></svg>
<svg x="860" y="1343" width="55" height="56" viewBox="0 0 55 56"><rect width="55" height="56" rx="13" fill="#f1443a"/><path d="M17 17l12 12-12 12-11-12zM31 15l14 14-14 14-4-4 10-10-10-10z" fill="#fff"/></svg>
<svg x="932" y="1343" width="55" height="56" viewBox="0 0 55 56"><rect width="55" height="56" rx="13" fill="#2b1552"/><circle cx="28" cy="30" r="22" fill="#ef6b1d"/><path d="M33 6q14 8 16 24-3 16-16 20 10-10 6-24-2-8-6-20z" fill="#fbc02d"/><path d="M8 24q8-14 20-12-8 4-6 10-8 2-14 2z" fill="#f5a623"/><circle cx="28" cy="31" r="12" fill="#5b2aa8"/><path d="M18 26q8-7 16-2l-8 4z" fill="#9b4fd9"/></svg>
<svg x="1004" y="1343" width="55" height="56" viewBox="0 0 55 56"><rect width="55" height="56" rx="13" fill="url(#gMail)"/><path d="M6 22h43v21H6z" fill="#e7f2fb"/><path d="M6 22l21 15 22-15-22-8z" fill="#bfdcf7"/><path d="M6 43l18-13M49 43 31 30" stroke="#a8cdf0" stroke-width="1.500"/></svg>
<svg x="1076" y="1343" width="55" height="56" viewBox="0 0 55 56"><rect width="55" height="56" rx="13" fill="#f7f6f1"/><path d="M0 16V13A13 13 0 0 1 13 0h29a13 13 0 0 1 13 13v3z" fill="#fbd131"/><path d="M0 16h55" stroke="#c6b988" stroke-dasharray="2 2"/><path d="M9 28h37M9 42h37" stroke="#b9b9b5" stroke-width="1.500"/></svg>
<svg x="1148" y="1343" width="55" height="56" viewBox="0 0 55 56"><rect width="55" height="56" rx="13" fill="url(#gFace)"/><path d="M8 49l3-12a20 20 0 1 1 8 8z" fill="none" stroke="#f2fbf3" stroke-width="3.500"/><path d="M20 17q-4 4 0 11 5 8 13 10 6 0 6-6l-6-3-3 3q-5-2-7-8l3-3-3-6z" fill="#f2fbf3"/></svg>
<svg x="1220" y="1343" width="55" height="56" viewBox="0 0 55 56"><rect width="55" height="56" rx="13" fill="#fbfbfb"/><path d="M27.500 8a20 20 0 0 1 17.300 10H27.500a10 10 0 0 0-9.500 7L9.500 18A20 20 0 0 1 27.500 8z" fill="#e23b31"/><path d="M7.800 20a20 20 0 0 0 15 27.500l8-11a10 10 0 0 1-12-7z" fill="#2a9e4c"/><path d="M44.800 18a20 20 0 0 1-20 30l8.500-13a10 10 0 0 0 2-17z" fill="#f7c623"/><circle cx="27.500" cy="28" r="8.500" fill="#3b82ea" stroke="#fff" stroke-width="2"/></svg>
<svg x="1292" y="1343" width="55" height="56" viewBox="0 0 55 56"><rect width="55" height="56" rx="13" fill="#3d3d3d" stroke="#5c5c5c"/><path d="M42 9v11L13 29V18zM13 20l29 9v11L13 31zM42 31v11L13 51V40z" fill="#f7941e"/></svg>
<svg x="1363" y="1343" width="55" height="56" viewBox="0 0 55 56"><rect width="55" height="56" rx="13" fill="#fbfbfb"/><circle cx="27.500" cy="27" r="22" fill="#2c8ff0"/><circle cx="27.500" cy="27" r="19" fill="none" stroke="#bcdcfa" stroke-width="2" stroke-dasharray="1 3"/><path d="M41 12 24 24l7 6z" fill="#f44336"/><path d="M14 42l17-12-7-6z" fill="#f4f4f4"/></svg>
<svg x="1435" y="1343" width="55" height="56" viewBox="0 0 55 56"><rect width="55" height="56" rx="13" fill="#dd5a2c"/><circle cx="27.500" cy="28" r="22.500" fill="none" stroke="#fff" stroke-width="2.500"/><path d="M17 11q12-6 18 6 3 8 2 14 2 8 1 17-8 3-15 0-4-16-6-37z" fill="#fff"/><circle cx="27" cy="19" r="2" fill="#22394f"/><path d="M27 27q8-3 12-1-3 5-10 5z" fill="#f3b51e"/><path d="M23 37l13-2v7l-6-2-7 2z" fill="#65bb46"/></svg>
<svg x="1506" y="1343" width="55" height="56" viewBox="0 0 55 56"><rect width="55" height="56" rx="13" fill="#fbfbfb"/><ellipse cx="27.500" cy="28" rx="19.500" ry="22.500" fill="#d81f2a"/><ellipse cx="27.500" cy="28" rx="9.500" ry="18.500" fill="#fbfbfb"/></svg>
<svg x="1579" y="1343" width="55" height="56" viewBox="0 0 55 56"><rect width="55" height="56" rx="13" fill="#fbfbfb"/><rect x="16" y="8" width="30" height="41" rx="3" fill="#21a366"/><path d="M30 8h16v14H30z" fill="#33c481"/><path d="M30 22h16v13H30z" fill="#21a366"/><path d="M16 35h30v14H16z" fill="#185c37"/><rect x="5" y="17" width="20" height="22" rx="2" fill="#107c41"/><text x="15" y="33" font-size="15" fill="#fff" text-anchor="middle" font-weight="700">X</text></svg>
<svg x="1650" y="1343" width="55" height="56" viewBox="0 0 55 56"><rect width="55" height="56" rx="13" fill="#fbfbfb"/><text x="27.500" y="25" font-size="12" font-weight="700" fill="#1b5e8e" text-anchor="middle" textLength="36">Vedmarg</text><text x="27.500" y="43" font-size="18" fill="#1a86c8" text-anchor="middle" textLength="46" font-weight="700">admin</text></svg>
<svg x="1722" y="1343" width="55" height="56" viewBox="0 0 55 56"><rect width="55" height="56" rx="13" fill="url(#gV)"/><text x="27.500" y="33" font-size="14" font-weight="700" fill="#fff" text-anchor="middle" textLength="47">Vedmarg</text></svg>
<svg x="1795" y="1343" width="55" height="56" viewBox="0 0 55 56"><rect width="55" height="56" rx="13" fill="#1d3d54"/><rect y="44" width="55" height="12" fill="#335469" rx="6"/><path d="M26 11l6 9-6 9-6-9z" fill="#fff"/><path d="M32 21l10 11-15 15-2-2 5-12-6-5z" fill="#55dcbc"/><path d="M21 46l2 5 2-3 2 3 2-3 2 3 3-5" stroke="#fff" stroke-width="2" fill="none"/></svg>
<svg x="1866" y="1343" width="55" height="56" viewBox="0 0 55 56"><rect width="55" height="56" rx="13" fill="#fbfbfb"/><g fill="#1fa3ee"><rect x="12" y="13" width="15" height="15"/><rect x="29" y="13" width="15" height="15"/><rect x="12" y="30" width="15" height="15"/><rect x="29" y="30" width="15" height="15"/></g></svg>
<svg x="1971" y="1343" width="55" height="56" viewBox="0 0 55 56"><rect width="55" height="56" rx="13" fill="url(#gFace)"/><path d="M15 9q-6 5-3 15 7 16 22 25 8 2 11-3l-9-7-5 3q-6-4-9-13l4-4-5-14z" fill="#e8f7ea"/></svg>
<svg x="2075" y="1345" width="58" height="52" viewBox="0 0 58 52"><rect x="10" y="1" width="40" height="42" fill="#f1f2f4"/><rect x="4" y="6" width="46" height="40" fill="#fafafa" stroke="#ddd"/><rect x="0" y="12" width="54" height="38" fill="#fff" stroke="#ddd"/><path d="M6 16h14" stroke="#5fa6e8" stroke-width="2"/><path d="M5 24h44M5 30h44M5 36h44M5 42h44" stroke="#8d8d8d" stroke-width="2" stroke-dasharray="3 3"/><rect y="48" width="54" height="3" fill="#444"/></svg>
<svg x="2149" y="1340" width="44" height="60" viewBox="0 0 44 60"><path d="M1 10h42l-4 47q-1 3-4 3H9q-3 0-4-3z" fill="url(#gTr)"/><ellipse cx="22" cy="10" rx="21" ry="5" fill="#c7c7c7"/><path d="M10 9l4-7 6 7zM24 9l6-7 5 7z" fill="#9b9b9b"/><path d="M26 9l8-7 5 7z" fill="#3aa7e8"/><path d="M20 9l5-5 5 5z" fill="#e4694a"/></svg>

<!-- dots -->
<g fill="#0d0d0d"><circle cx="384" cy="1407" r="2.500"/><circle cx="960" cy="1407" r="2.500"/><circle cx="1031" cy="1407" r="2.500"/><circle cx="1175" cy="1407" r="2.500"/><circle cx="1247" cy="1407" r="2.500"/><circle cx="1391" cy="1407" r="2.500"/><circle cx="1462" cy="1407" r="2.500"/><circle cx="1534" cy="1407" r="2.500"/></g>
<!-- badges -->
<circle cx="1052" cy="1349" r="13" fill="#e8352e"/><text x="1052" y="1354" font-size="13" fill="#fff" text-anchor="middle">5</text>
<circle cx="1196" cy="1349" r="13" fill="#e8352e"/><text x="1196" y="1354" font-size="13" fill="#fff" text-anchor="middle">3</text>
</svg>
</div>
</body></html>
